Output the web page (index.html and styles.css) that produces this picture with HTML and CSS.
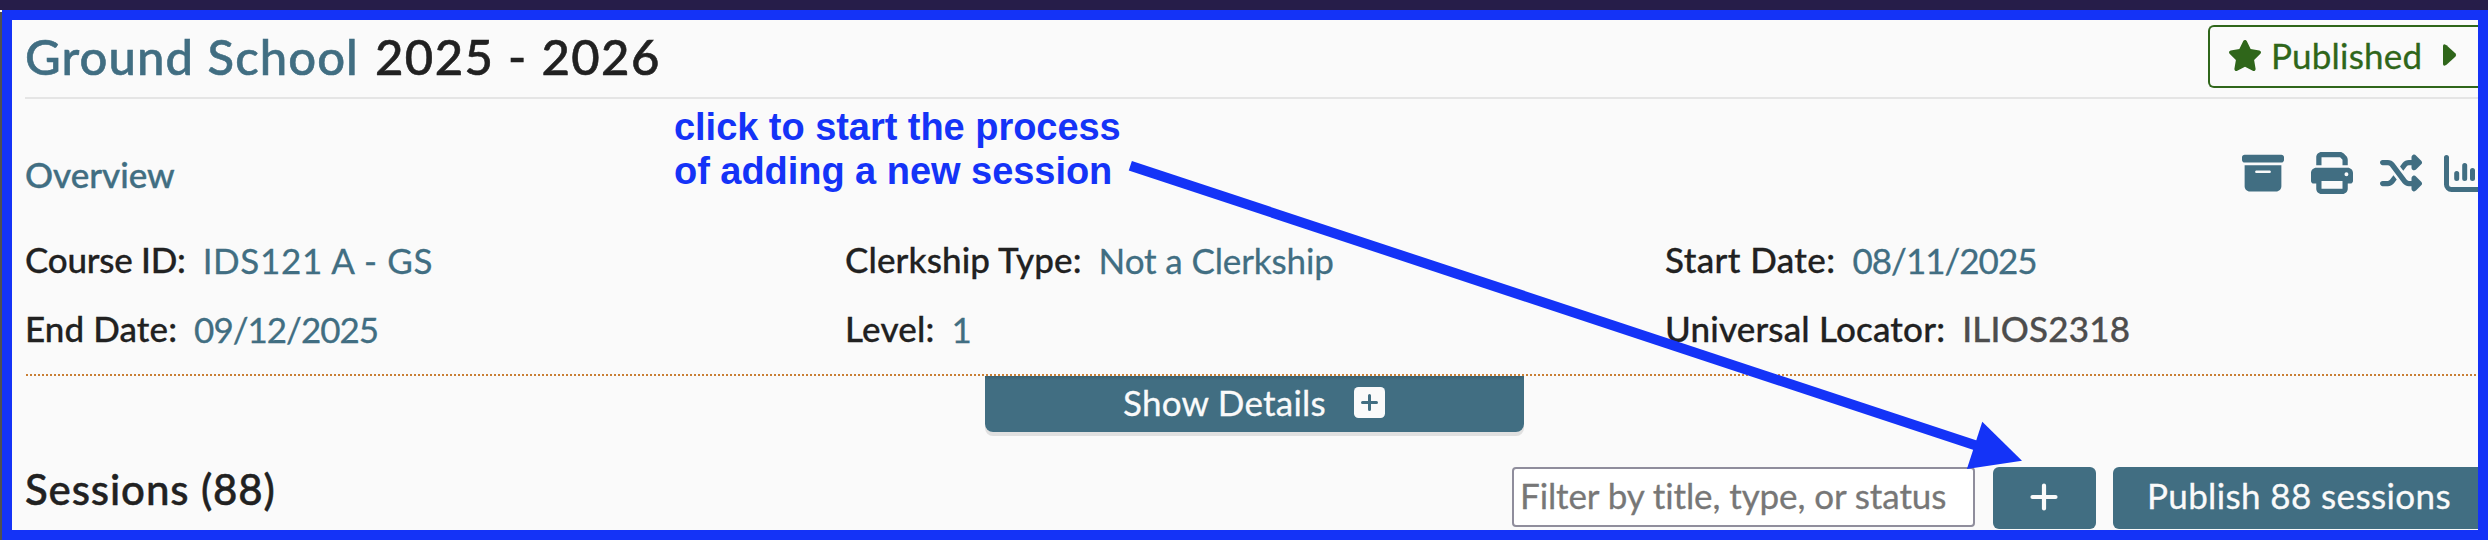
FILE: index.html
```
<!DOCTYPE html>
<html lang="en">
<head>
<meta charset="utf-8">
<title>Ground School 2025 - 2026</title>
<link rel="stylesheet" href="styles.css">
</head>
<body>
<div class="screen">
  <div class="topbar"></div>
  <main class="course">
    <header class="course-header">
      <h1 class="title"><span class="title-name">Ground School</span><span class="title-year">2025 - 2026</span></h1>
      <button class="published">
        <svg class="star" viewBox="24 0 528 512"><path d="M316.9 18C311.6 7 300.4 0 288.1 0s-23.4 7-28.8 18L195 150.3 51.4 171.5c-12 1.8-22 10.2-25.7 21.7s-.7 24.2 7.9 32.7L137.8 329 113.2 474.7c-2 12 3 24.2 12.9 31.3s23 8 33.8 2.3l128.3-68.5 128.3 68.5c10.8 5.7 23.9 4.9 33.8-2.3s14.9-19.3 12.9-31.3L438.5 329 542.7 225.9c8.6-8.5 11.7-21.2 7.9-32.7s-13.7-19.9-25.7-21.7L381.2 150.3 316.9 18z"/></svg>
        <span class="published-label">Published</span>
        <svg class="caret" viewBox="0 0 14 22"><path d="M0 2Q0 0 2 .4L3.500 1.200L12.300 9.300Q14 11 12.300 12.700L3.500 20.800L2 21.600Q0 22 0 20Z"/></svg>
      </button>
    </header>

    <section class="overview">
      <h2 class="overview-title">Overview</h2>
      <div class="tools">
        <svg class="tool" viewBox="0 0 512 512"><path d="M32 32H480c17.700 0 32 14.300 32 32V96c0 17.700-14.300 32-32 32H32C14.300 128 0 113.700 0 96V64C0 46.300 14.300 32 32 32zm0 128H480V416c0 35.300-28.700 64-64 64H96c-35.300 0-64-28.700-64-64V160zm128 80c0 8.800 7.200 16 16 16H336c8.800 0 16-7.200 16-16s-7.200-16-16-16H176c-8.800 0-16 7.200-16 16z"/></svg>
        <svg class="tool" viewBox="0 0 512 512"><path d="M128 0C92.700 0 64 28.700 64 64v96h64V64H354.700L384 93.300V160h64V93.300c0-17-6.700-33.300-18.700-45.300L400 18.700C388 6.700 371.700 0 354.700 0H128zM384 352v96H128V352H384zm64 32h32c17.700 0 32-14.300 32-32V256c0-35.300-28.700-64-64-64H64c-35.300 0-64 28.700-64 64v96c0 17.700 14.300 32 32 32H64v64c0 35.300 28.700 64 64 64H384c35.300 0 64-28.700 64-64V384zM432 248a24 24 0 1 1 0 48 24 24 0 1 1 0-48z"/></svg>
        <svg class="tool" viewBox="0 0 512 512"><path d="M403.800 34.400c12-5 25.700-2.200 34.900 6.900l64 64c6 6 9.400 14.100 9.400 22.600s-3.400 16.600-9.400 22.600l-64 64c-9.200 9.200-22.900 11.900-34.900 6.900s-19.800-16.600-19.800-29.600V160H352c-10.100 0-19.600 4.700-25.600 12.800L284 229.300 244 176l31.200-41.600C293.300 110.200 321.800 96 352 96h32V64c0-12.900 7.800-24.600 19.800-29.600zM164 282.700L204 336l-31.200 41.600C154.700 401.800 126.200 416 96 416H32c-17.700 0-32-14.300-32-32s14.300-32 32-32H96c10.100 0 19.600-4.700 25.600-12.800L164 282.700zm274.600 188c-9.200 9.200-22.900 11.900-34.900 6.900s-19.800-16.600-19.800-29.600V416H352c-30.200 0-58.700-14.200-76.800-38.400L121.600 172.800c-6-8.100-15.500-12.800-25.600-12.800H32c-17.700 0-32-14.300-32-32S14.300 96 32 96H96c30.200 0 58.700 14.200 76.800 38.400L326.400 339.200c6 8.100 15.500 12.800 25.600 12.800h32V320c0-12.900 7.800-24.600 19.800-29.600s25.700-2.200 34.900 6.900l64 64c6 6 9.400 14.100 9.400 22.600s-3.400 16.600-9.400 22.600l-64 64z"/></svg>
        <svg class="tool tool-chart" viewBox="0 0 42 42"><path d="M2.500 5.500V32.500a5 5 0 0 0 5 5H40M12.700 21.500V26.500M20.700 13.500V26.500M28.500 18.500V26.500M36.500 9.500V26.500"/></svg>
      </div>
    </section>

    <section class="details">
      <div class="field"><span class="label t-course">Course ID:</span><span class="value v-id">IDS121 A - GS</span></div>
      <div class="field"><span class="label t-clerk">Clerkship Type:</span><span class="value v-clerk">Not a Clerkship</span></div>
      <div class="field"><span class="label t-start">Start Date:</span><span class="value v-date">08/11/2025</span></div>
      <div class="field"><span class="label t-end">End Date:</span><span class="value v-date">09/12/2025</span></div>
      <div class="field"><span class="label t-level">Level:</span><span class="value">1</span></div>
      <div class="field"><span class="label t-loc">Universal Locator:</span><span class="locator">ILIOS2318</span></div>
    </section>

    <div class="dots"></div>
    <button class="show">Show Details
      <svg class="show-icon" viewBox="0 0 31 31"><rect width="31" height="31" rx="4.500"/><path d="M8.500 15.500h14M15.500 8.500v14"/></svg>
    </button>

    <section class="sessions">
      <h2 class="sessions-title">Sessions (88)</h2>
      <div class="filter">Filter by title, type, or status</div>
      <button class="add"><svg class="add-icon" viewBox="0 0 28 28"><path d="M2.500 14h23M14 2.500v23"/></svg></button>
      <button class="publish">Publish 88 sessions</button>
    </section>
  </main>

  <div class="edge"></div>
  <div class="frame"></div>
  <p class="note">click to start the process<br>of adding a new session</p>
  <svg class="arrow" viewBox="0 0 2488 540"><path d="M1130.300 165.700L1976 445.500"/><polygon points="2022,460.700 1982.300,421.700 1966.900,469"/></svg>
</div>
</body>
</html>
```
FILE: styles.css
```
* { box-sizing: border-box; }
body { margin: 0; }
h1, h2, p { margin: 0; font-weight: 500; }
button { border: 0; padding: 0; font: inherit; text-align: left; }
svg { display: block; flex: none; }

.screen {
  position: relative;
  width: 2488px;
  height: 540px;
  overflow: hidden;
  background: #fafafa;
  color: #212121;
  font: 400 35px/69px Lato, "Open Sans", sans-serif;
  -webkit-text-stroke: .3px;
  white-space: nowrap;
}
.topbar { height: 10px; background: #261d49; }
.course { padding-left: 25px; }

.course-header {
  display: flex;
  justify-content: space-between;
  align-items: flex-start;
  height: 89px;
  padding-top: 5px;
  border-bottom: 2px solid #e5e5e5;
}
.title { display: flex; font-size: 49px; line-height: 83px; -webkit-text-stroke: .6px; }
.title-name { width: 350px; color: #416e82; letter-spacing: 1.08px; }
.title-year { letter-spacing: 1.4px; }
.published {
  display: flex;
  width: 280px;
  height: 63px;
  margin-top: 10px;
  padding-left: 19px;
  border: 2px solid #2f661a;
  border-right: 0;
  border-radius: 6px 0 0 6px;
  background: #fafafa;
  color: #2f661a;
  fill: #2f661a;
}
.star { width: 32px; height: 31px; margin-top: 13px; }
.published-label { width: 172px; margin-left: 10px; line-height: 57px; letter-spacing: .2px; }
.caret { width: 14px; height: 22px; margin-top: 17px; }

.overview { display: flex; justify-content: space-between; height: 126px; }
.overview-title { padding-top: 41px; color: #416e82; font-size: 35px; -webkit-text-stroke: .4px; }
.tools { display: flex; width: 246px; gap: 27px; padding-top: 52.5px; }
.tool { width: 42px; height: 42px; fill: #416e82; }
.tool-chart { margin-left: -5px; fill: none; stroke: #416e82; stroke-width: 5px; stroke-linecap: round; }

.details { display: grid; grid-template-columns: 820px 820px auto; grid-auto-rows: 69px; height: 149px; }
.field { display: flex; gap: 17px; }
.label, .locator { font-weight: 500; -webkit-text-stroke: .3px; }
.value { padding-top: 1px; color: #416e82; }
.locator { color: #4d4d4d; letter-spacing: .2px; }
.t-course { letter-spacing: -.25px; }
.t-clerk { letter-spacing: .12px; }
.t-start { letter-spacing: .4px; }
.t-end { letter-spacing: .1px; }
.t-level { letter-spacing: .2px; }
.t-loc { letter-spacing: .17px; }
.v-id { letter-spacing: .65px; }
.v-clerk { letter-spacing: -.12px; }
.v-date { letter-spacing: -1px; }

.dots {
  height: 2px;
  margin-left: 1px;
  background: repeating-linear-gradient(90deg, #c97f35 0 2px, transparent 2px 4px);
}
.show {
  display: flex;
  width: 539px;
  height: 56px;
  margin-left: 960px;
  padding-left: 138px;
  border-radius: 0 0 8px 8px;
  background: linear-gradient(#3a6173, #416e82 4px);
  box-shadow: 0 4px 0 #e0e0e0;
  color: #fafafa;
  line-height: 53px;
  letter-spacing: .25px;
}
.show-icon { width: 31px; height: 31px; margin: 11px 0 0 28px; fill: #fafafa; }
.show-icon path { stroke: #416e82; stroke-width: 3px; stroke-linecap: round; }

.sessions { display: flex; align-items: flex-start; padding-top: 35px; }
.sessions-title { width: 1487px; font-size: 42px; line-height: 44px; letter-spacing: .88px; -webkit-text-stroke: .5px; }
.filter {
  width: 463px;
  height: 60px;
  padding-left: 6px;
  border: 2px solid #8f8d9c;
  border-radius: 4px;
  background: #fff;
  color: #777;
  line-height: 52px;
  letter-spacing: -.09px;
}
.add, .publish { height: 62px; background: #416e82; color: #fafafa; }
.add { width: 103px; margin: 0 17px 0 18px; padding-left: 37px; border-radius: 6px; }
.add-icon { width: 28px; height: 28px; margin-top: -2px; fill: none; stroke: #fafafa; stroke-width: 4.2px; stroke-linecap: round; }
.publish { width: 375px; padding: 0 0 5px 34px; border-radius: 6px 0 0 6px; line-height: 57px; letter-spacing: .38px; }

/* annotation layer over the page */
.edge { position: absolute; left: 0; top: 12px; bottom: 0; width: 2px; background: #505050; }
.frame { position: absolute; inset: 10px 0 0 2px; border: 10px solid #1433f7; }
.note {
  position: absolute;
  left: 674px;
  top: 105px;
  color: #1433f7;
  font: 700 38px/44px "Liberation Sans", Arial, sans-serif;
  letter-spacing: -.04px;
  -webkit-text-stroke: 0;
}
.arrow { position: absolute; left: 0; top: 0; width: 2488px; height: 540px; fill: #1433f7; }
.arrow path { stroke: #1433f7; stroke-width: 10px; }
```
